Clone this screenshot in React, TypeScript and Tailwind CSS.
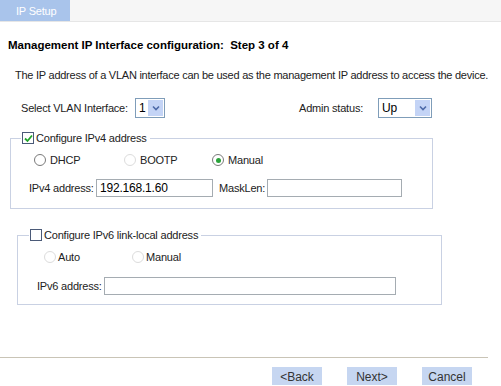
import React from "react";

const Check = ({ checked }: { checked?: boolean }) => (
  <span className="flex h-[12px] w-[12px] shrink-0 items-center justify-center border border-[#4b5a78] bg-white">
    {checked && (
      <svg width="9" height="9" viewBox="0 0 9 9">
        <path d="M1 4.5 L3.5 7 L8 1.5" fill="none" stroke="#21a52a" strokeWidth="1.8" />
      </svg>
    )}
  </span>
);

const Radio = ({ checked, disabled }: { checked?: boolean; disabled?: boolean }) => (
  <span
    className={
      disabled
        ? "flex h-[12px] w-[12px] shrink-0 items-center justify-center rounded-full border border-[#dcdcdc] bg-white"
        : "flex h-[12px] w-[12px] shrink-0 items-center justify-center rounded-full border border-[#7a7a7a] bg-white"
    }
  >
    {checked && <span className="h-[5px] w-[5px] rounded-full bg-[#2aa33a]" />}
  </span>
);

const Select = ({ value, width }: { value: string; width: string }) => (
  <div className={`flex h-[20px] shrink-0 items-center border border-[#7f9db9] bg-white ${width}`}>
    <span className="flex-1 pl-[3px] text-[12px] text-black">{value}</span>
    <span className="mr-px flex h-[16px] w-[15px] items-center justify-center bg-[#c4d4f6]">
      <svg width="8" height="6" viewBox="0 0 8 6">
        <path d="M1 1.5 L4 4.5 L7 1.5" fill="none" stroke="#4d6aa8" strokeWidth="1.6" />
      </svg>
    </span>
  </div>
);

const Input = ({ value, width }: { value?: string; width: string }) => (
  <div className={`flex h-[18px] shrink-0 items-center border border-[#a5acb2] bg-white pl-[3px] text-[12px] text-black ${width}`}>
    {value}
  </div>
);

export default function App() {
  return (
    <div className="h-[386px] w-[501px] overflow-hidden whitespace-nowrap bg-white font-['Liberation_Sans',Arial,sans-serif] text-[11px] leading-[14px] tracking-[-0.2px] text-[#222]">
      <div className="flex h-[22px] border-b border-[#e6e6e6] bg-[#f6f6f6]">
        <div className="flex w-[70px] items-center bg-[#a9c4eb] pl-[16px] text-white">IP Setup</div>
      </div>

      <div className="mt-[16px] pl-[8px] text-[11.5px] font-bold tracking-normal text-black">
        Management IP Interface configuration:&nbsp; Step 3 of 4
      </div>

      <div className="mt-[16px] pl-[15px] tracking-[-0.25px]">
        The IP address of a VLAN interface can be used as the management IP address to access the device.
      </div>

      <div className="mt-[16px] flex h-[20px] items-center pl-[21px]">
        <span className="w-[114px]">Select VLAN Interface:</span>
        <Select value="1" width="w-[30px]" />
        <span className="ml-[134px] w-[79px]">Admin status:</span>
        <Select value="Up" width="w-[54px]" />
      </div>

      <fieldset className="ml-[10px] mt-[13px] w-[423px] border border-[#c9d1e3] pb-[11px] pl-[10px]">
        <legend className="flex items-center gap-[2px] pl-px pr-[3px]">
          <Check checked />
          <span>Configure IPv4 address</span>
        </legend>
        <div className="mt-[8px] flex h-[14px] items-center pl-[13px]">
          <div className="flex w-[90px] items-center gap-[4px]">
            <Radio />
            <span>DHCP</span>
          </div>
          <div className="flex w-[88px] items-center gap-[4px]">
            <Radio disabled />
            <span>BOOTP</span>
          </div>
          <div className="flex items-center gap-[4px]">
            <Radio checked />
            <span>Manual</span>
          </div>
        </div>
        <div className="mt-[12px] flex items-center pl-[8px]">
          <span className="w-[67px]">IPv4 address:</span>
          <Input value="192.168.1.60" width="w-[117px]" />
          <span className="ml-[6px] w-[48px]">MaskLen:</span>
          <Input width="w-[135px]" />
        </div>
      </fieldset>

      <fieldset className="ml-[17px] mt-[19px] w-[425px] border border-[#c9d1e3] pb-[9px] pl-[11px]">
        <legend className="flex items-center gap-[2px] pl-px pr-[3px]">
          <Check />
          <span>Configure IPv6 link-local address</span>
        </legend>
        <div className="mt-[8px] flex h-[14px] items-center pl-[15px]">
          <div className="flex w-[88px] items-center gap-[2px]">
            <Radio disabled />
            <span>Auto</span>
          </div>
          <div className="flex items-center gap-[2px]">
            <Radio disabled />
            <span>Manual</span>
          </div>
        </div>
        <div className="mt-[13px] flex items-center pl-[8px]">
          <span className="w-[67px]">IPv6 address:</span>
          <Input width="w-[292px]" />
        </div>
      </fieldset>

      <div className="mt-[52px] h-px w-[488px] bg-[#c9c4b6]" />

      <div className="mt-[9px] flex gap-[25px] pl-[272px]">
        {["<Back", "Next>", "Cancel"].map((b) => (
          <button key={b} className="h-[18px] w-[50px] bg-[#c6d6f1] pt-[1px] text-[12px] tracking-normal text-[#333]">
            {b}
          </button>
        ))}
      </div>
    </div>
  );
}
